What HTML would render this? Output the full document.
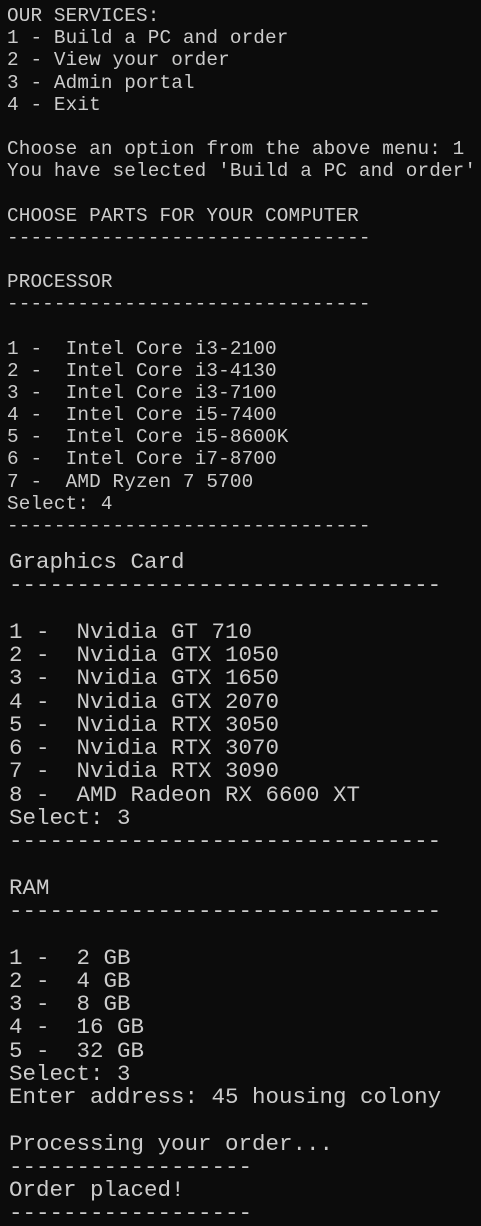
<!DOCTYPE html>
<html><head><meta charset="utf-8"><style>
html,body{margin:0;padding:0;background:#0c0c0c;width:481px;height:1220px;overflow:hidden}
pre{position:absolute;margin:0;color:#cccccc;font-family:"Liberation Mono","DejaVu Sans Mono",monospace;white-space:pre}
#a{left:7px;top:5px;font-size:19.35px;line-height:22.17px;letter-spacing:0.12px}
#b{left:9px;top:551px;font-size:22.5px;line-height:23.27px}
</style></head><body>
<pre id="a">OUR SERVICES:
1 - Build a PC and order
2 - View your order
3 - Admin portal
4 - Exit

Choose an option from the above menu: 1
You have selected 'Build a PC and order'

CHOOSE PARTS FOR YOUR COMPUTER
-------------------------------

PROCESSOR
-------------------------------

1 -  Intel Core i3-2100
2 -  Intel Core i3-4130
3 -  Intel Core i3-7100
4 -  Intel Core i5-7400
5 -  Intel Core i5-8600K
6 -  Intel Core i7-8700
7 -  AMD Ryzen 7 5700
Select: 4
-------------------------------</pre>
<pre id="b">Graphics Card
--------------------------------

1 -  Nvidia GT 710
2 -  Nvidia GTX 1050
3 -  Nvidia GTX 1650
4 -  Nvidia GTX 2070
5 -  Nvidia RTX 3050
6 -  Nvidia RTX 3070
7 -  Nvidia RTX 3090
8 -  AMD Radeon RX 6600 XT
Select: 3
--------------------------------

RAM
--------------------------------

1 -  2 GB
2 -  4 GB
3 -  8 GB
4 -  16 GB
5 -  32 GB
Select: 3
Enter address: 45 housing colony

Processing your order...
------------------
Order placed!
------------------</pre>
</body></html>
